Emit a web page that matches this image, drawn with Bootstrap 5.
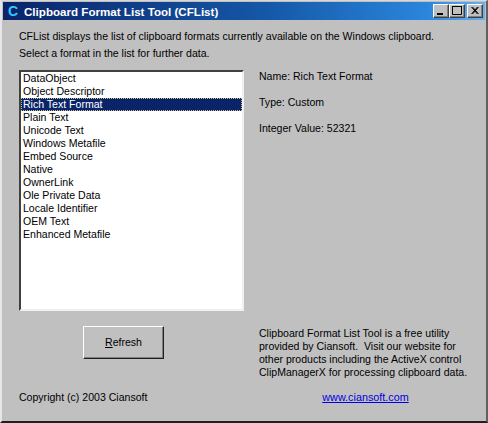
<!DOCTYPE html>
<html lang="en"><head><meta charset="utf-8"><title>CFList</title>
<link href="https://cdn.jsdelivr.net/npm/bootstrap@5.3.0/dist/css/bootstrap.min.css" rel="stylesheet">
<style>
html,body{margin:0;height:423px;overflow:hidden;background:#c0c0c0}
body{font-family:"Liberation Sans",Arial,sans-serif;font-size:10.55px;line-height:13px;color:#000}
.win-frame{width:488px;height:423px;background:#c0c0c0;border-top:1px solid #d8d8d8;border-left:2px solid #e6e6e6;border-right:2px solid #606060;border-bottom:2px solid #202020;padding:1px}
.win-title{height:18px;background:linear-gradient(90deg,#0a246a 0%,#1558a8 55%,#2a86dc 88%,#6ab0f0 100%);color:#fff;font-weight:700;font-size:11.6px;padding:0 2px 0 2px}
.win-logo{width:16px;color:#35c8ff;font-size:14px;font-weight:700;text-align:center;margin-right:3px}
.win-btn{width:16px;height:14px;background:#c0c0c0;border:1px solid;border-color:#fff #404040 #404040 #fff;box-shadow:inset -1px -1px 0 #808080}
.win-btn svg{display:block}
.win-btn-gap{margin-left:2px}
.win-body{padding:0 14px 0 16px;height:398px}
.intro-text{height:34px;margin-top:8px;line-height:17px;white-space:nowrap}
.list-col{width:225px;flex:none}
.fmt-list{height:241px;background:#fff;border:2px solid;border-color:#404040 #f0f0f0 #f0f0f0 #404040;padding:0;margin:0;list-style:none}
.fmt-list li{height:13px;line-height:13px;padding-left:2px;white-space:nowrap}
.fmt-list li.sel{background:#0a246a;color:#fff;outline:1px dotted #d0c080;outline-offset:-1px}
.detail-col{padding-left:15px}
.detail-col div{height:26px;line-height:13px}
.main-row{margin-top:8px;height:241px}
.refresh-btn{width:81px;height:33px;background:#c0c0c0;border:1px solid;border-color:#fff #202020 #202020 #fff;box-shadow:inset -1px -1px 0 #808080;margin:15px 0 0 64px;font-size:10.55px;line-height:13px;padding:0;color:#000;border-radius:0}
.low-row{height:68px}
.low-left{width:225px;flex:none}
.low-right{padding-left:15px;padding-top:16px;white-space:nowrap}
.foot-row{margin-top:12px}
.foot-copy{width:225px;flex:none}
.foot-link{width:217px;text-align:center;margin-left:16px;font-size:10.8px}
.foot-link a{color:#0000e0;text-decoration:underline}
u{text-decoration:underline}
</style></head><body>
<div class="win-frame d-flex flex-column">
 <div class="win-title d-flex align-items-center">
  <span class="win-logo">C</span>
  <span class="flex-grow-1">Clipboard Format List Tool (CFList)</span>
  <span class="win-btn"><svg width="14" height="12" viewBox="0 0 14 12"><rect x="3" y="8" width="6" height="2" fill="#000"/></svg></span>
  <span class="win-btn"><svg width="14" height="12" viewBox="0 0 14 12"><path d="M2.5 1.5h9v8h-9z" fill="none" stroke="#000"/><path d="M2 1.5h10" stroke="#000"/></svg></span>
  <span class="win-btn win-btn-gap"><svg width="14" height="12" viewBox="0 0 14 12"><path d="M3.5 2l6 7M4.5 2l6 7M9.5 2l-6 7M10.5 2l-6 7" stroke="#000" fill="none"/></svg></span>
 </div>
 <div class="win-body">
  <div class="intro-text">CFList displays the list of clipboard formats currently available on the Windows clipboard.<br>Select a format in the list for further data.</div>
  <div class="d-flex main-row">
   <div class="list-col">
    <ul class="fmt-list">
     <li>DataObject</li><li>Object Descriptor</li><li class="sel">Rich Text Format</li><li>Plain Text</li><li>Unicode Text</li><li>Windows Metafile</li><li>Embed Source</li><li>Native</li><li>OwnerLink</li><li>Ole Private Data</li><li>Locale Identifier</li><li>OEM Text</li><li>Enhanced Metafile</li>
    </ul>
   </div>
   <div class="detail-col">
    <div>Name: Rich Text Format</div><div>Type: Custom</div><div>Integer Value: 52321</div>
   </div>
  </div>
  <div class="d-flex low-row">
   <div class="low-left"><button class="btn refresh-btn" type="button"><u>R</u>efresh</button></div>
   <div class="low-right">Clipboard Format List Tool is a free utility<br>provided by Ciansoft.&nbsp; Visit our website for<br>other products including the ActiveX control<br>ClipManagerX for processing clipboard data.</div>
  </div>
  <div class="d-flex foot-row">
   <div class="foot-copy">Copyright (c) 2003 Ciansoft</div>
   <div class="foot-link"><a href="#">www.ciansoft.com</a></div>
  </div>
 </div>
</div>
<script src="https://cdn.jsdelivr.net/npm/bootstrap@5.3.0/dist/js/bootstrap.bundle.min.js"></script>
</body></html>
